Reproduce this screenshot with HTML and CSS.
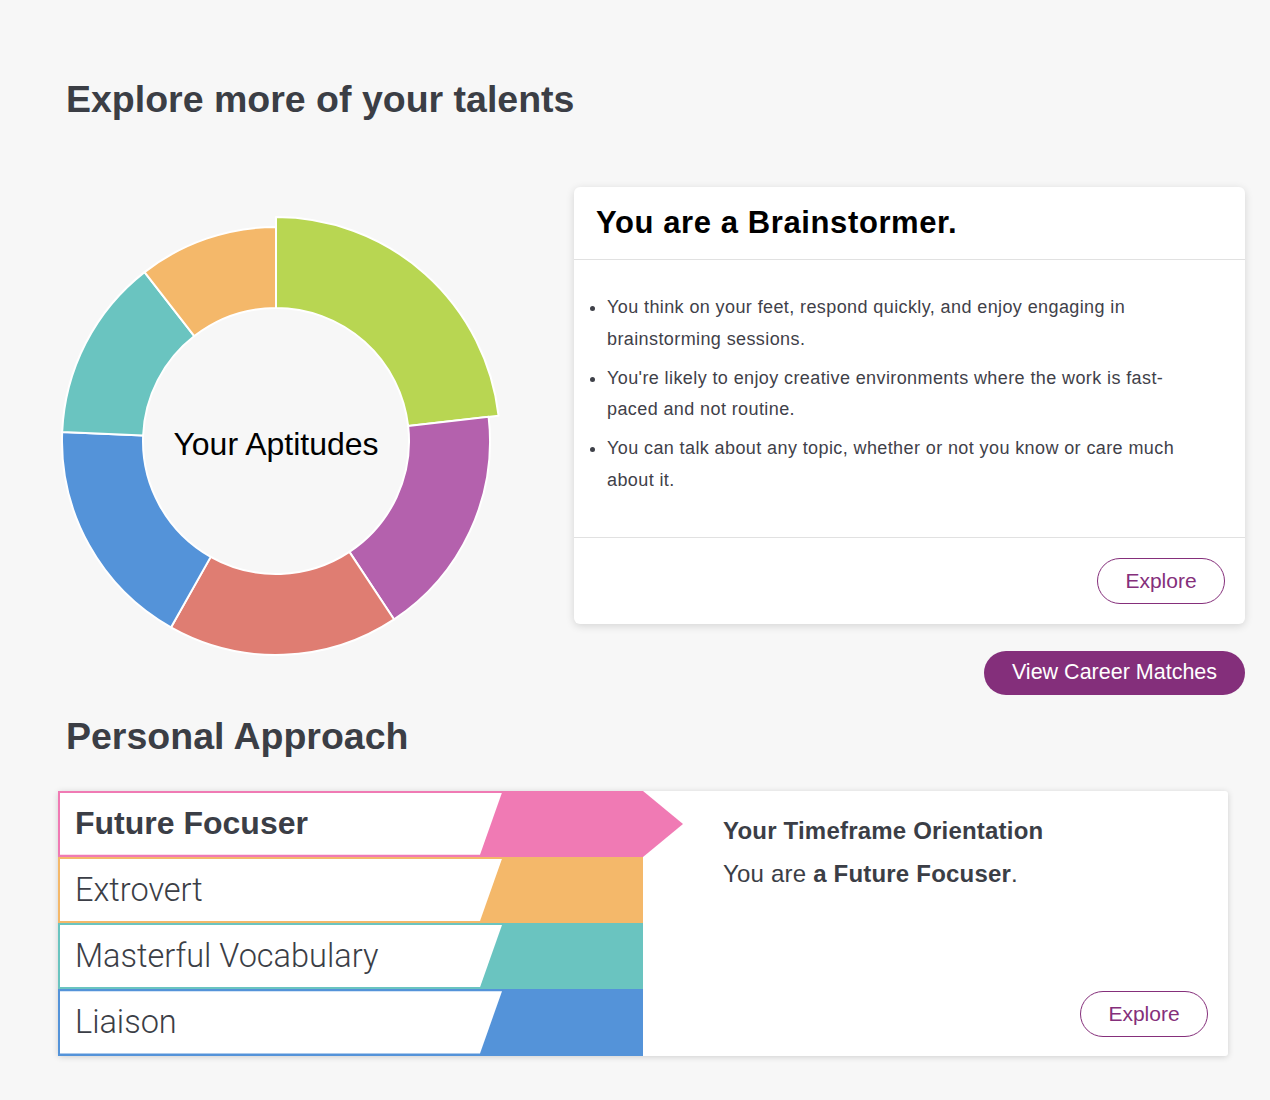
FILE: index.html
```html
<!DOCTYPE html>
<html lang="en">
<head>
<meta charset="utf-8">
<title>Explore more of your talents</title>
<link rel="stylesheet" href="styles.css">
</head>
<body>
<main class="page">
  <h1 class="section-title">Explore more of your talents</h1>

  <section class="talents">
    <div class="chart">
      <svg class="donut" width="460" height="460" viewBox="0 0 460 460" aria-label="Your Aptitudes chart">
        <g stroke="#ffffff" stroke-width="2" stroke-linejoin="round">
          <path fill="#b8d652" d="M230 6 A224 224 0 0 1 452.56 204.64 L362.14 214.94 A133 133 0 0 0 230 97 Z"/>
          <path fill="#b461ad" d="M442.62 205.78 A214 214 0 0 1 348.12 408.45 L303.41 340.91 A133 133 0 0 0 362.14 214.94 Z"/>
          <path fill="#df7d72" d="M348.12 408.45 A214 214 0 0 1 124.95 416.44 L164.71 345.87 A133 133 0 0 0 303.41 340.91 Z"/>
          <path fill="#5493d9" d="M124.95 416.44 A214 214 0 0 1 16.19 221.04 L97.12 224.43 A133 133 0 0 0 164.71 345.87 Z"/>
          <path fill="#6ac4c0" d="M16.19 221.04 A214 214 0 0 1 98.54 61.14 L148.30 125.05 A133 133 0 0 0 97.12 224.43 Z"/>
          <path fill="#f4b86a" d="M98.54 61.14 A214 214 0 0 1 230 16 L230 97 A133 133 0 0 0 148.30 125.05 Z"/>
        </g>
        <text class="donut-label" x="230" y="244" text-anchor="middle">Your Aptitudes</text>
      </svg>
    </div>

    <div class="side">
      <article class="card">
        <header class="card-head">
          <h2 class="card-title">You are a Brainstormer.</h2>
        </header>
        <ul class="card-list">
          <li>You think on your feet, respond quickly, and enjoy engaging in brainstorming sessions.</li>
          <li>You're likely to enjoy creative environments where the work is fast-paced and not routine.</li>
          <li>You can talk about any topic, whether or not you know or care much about it.</li>
        </ul>
        <footer class="card-foot">
          <button class="btn-outline" type="button">Explore</button>
        </footer>
      </article>
      <div class="matches-row">
        <button class="btn-solid" type="button">View Career Matches</button>
      </div>
    </div>
  </section>

  <h1 class="section-title approach-title">Personal Approach</h1>

  <section class="approach">
    <div class="traits">
      <div class="trait trait-pink active"><span class="trait-label"><strong>Future Focuser</strong></span></div>
      <div class="trait trait-orange"><span class="trait-label">Extrovert</span></div>
      <div class="trait trait-teal"><span class="trait-label">Masterful Vocabulary</span></div>
      <div class="trait trait-blue"><span class="trait-label">Liaison</span></div>
    </div>
    <div class="detail">
      <h3 class="detail-title">Your Timeframe Orientation</h3>
      <p class="detail-text">You are <strong>a Future Focuser</strong>.</p>
      <div class="detail-foot">
        <button class="btn-outline" type="button">Explore</button>
      </div>
    </div>
  </section>
</main>
</body>
</html>
```

FILE: styles.css
```css
* { box-sizing: border-box; }

html, body {
  margin: 0;
  padding: 0;
  background: #f7f7f7;
}

body {
  font-family: "Liberation Sans", Arial, Helvetica, sans-serif;
  color: #3b3e46;
}

.page {
  width: 1270px;
  padding: 78px 25px 40px 58px;
}

.section-title {
  margin: 0;
  padding-left: 8px;
  font-size: 37.5px;
  line-height: 42px;
  font-weight: 700;
  color: #3b3e45;
}

/* ---------- top section ---------- */
.talents {
  display: flex;
  align-items: flex-start;
  margin-top: 67px;
}

.chart {
  width: 516px;
  flex: none;
}

.donut {
  display: block;
  margin: 24px 0 0 -12px;
}

.donut-label {
  font-family: "Liberation Sans", Arial, sans-serif;
  font-size: 32px;
  fill: #000000;
}

.side {
  flex: 1;
  display: flex;
  flex-direction: column;
}

.card {
  background: #ffffff;
  border-radius: 6px;
  box-shadow: 0 2px 8px rgba(0, 0, 0, 0.14);
}

.card-head {
  height: 73px;
  padding: 0 22px;
  display: flex;
  align-items: center;
  border-bottom: 1px solid #e1e1e1;
}

.card-title {
  margin: 0;
  font-size: 31px;
  letter-spacing: 0.6px;
  font-weight: 700;
  color: #000000;
}

.card-list {
  margin: 0;
  padding: 32px 45px 33px 33px;
  font-size: 18px;
  letter-spacing: 0.4px;
  line-height: 31.5px;
  color: #3f4149;
  border-bottom: 1px solid #e1e1e1;
}

.card-list li {
  margin-bottom: 7.5px;
}

.card-foot {
  display: flex;
  justify-content: flex-end;
  padding: 20px 20px 20px;
}

.btn-outline {
  height: 46px;
  width: 128px;
  border: 1px solid #852f7b;
  border-radius: 23px;
  background: #ffffff;
  color: #852f7b;
  font-family: "Liberation Sans", Arial, sans-serif;
  font-size: 21px;
  cursor: pointer;
}

.matches-row {
  display: flex;
  justify-content: flex-end;
  margin-top: 27px;
}

.btn-solid {
  height: 44px;
  width: 261px;
  border: 0;
  border-radius: 22px;
  background: #842f7b;
  color: #ffffff;
  font-family: "Liberation Sans", Arial, sans-serif;
  font-size: 21.5px;
  cursor: pointer;
}

/* ---------- personal approach ---------- */
.approach-title {
  margin-top: 20px;
}

.approach {
  display: flex;
  width: 1170px;
  height: 265px;
  margin-top: 34px;
  background: #ffffff;
  border-radius: 3px;
  box-shadow: 0 1px 6px rgba(0, 0, 0, 0.16);
}

.traits {
  width: 585px;
  flex: none;
  display: grid;
  grid-template-rows: repeat(4, 1fr);
}

.trait {
  position: relative;
  display: flex;
  padding: 2px 0 2px 2px;
}

.trait-pink { background: #f07ab4; }
.trait-orange { background: #f4b86a; }
.trait-teal { background: #6ac4c0; }
.trait-blue { background: #5493d9; }

.trait.active::after {
  content: "";
  position: absolute;
  left: 100%;
  top: 0;
  width: 0;
  height: 0;
  border-left: 40px solid #f07ab4;
  border-top: 33px solid transparent;
  border-bottom: 33px solid transparent;
}

.trait-label {
  width: 442px;
  background: #ffffff;
  clip-path: polygon(0 0, 100% 0, calc(100% - 22px) 100%, 0 100%);
  display: flex;
  align-items: center;
  padding-left: 15px;
  font-family: Roboto, "Liberation Sans", sans-serif;
  font-weight: 300;
  font-size: 32.5px;
  color: #3b3e46;
}

.trait-label strong {
  font-family: "Liberation Sans", Arial, sans-serif;
  font-weight: 700;
  font-size: 32px;
}

.detail {
  flex: 1;
  display: flex;
  flex-direction: column;
  padding: 24px 20px 19px 80px;
}

.detail-title {
  margin: 0;
  font-size: 24px;
  letter-spacing: 0.2px;
  line-height: 32px;
  font-weight: 700;
  color: #3b3e46;
}

.detail-text {
  margin: 11px 0 0;
  font-size: 24px;
  letter-spacing: 0.2px;
  line-height: 32px;
  color: #3b3e46;
}

.detail-text strong {
  font-weight: 700;
}

.detail-foot {
  margin-top: auto;
  display: flex;
  justify-content: flex-end;
}
```
